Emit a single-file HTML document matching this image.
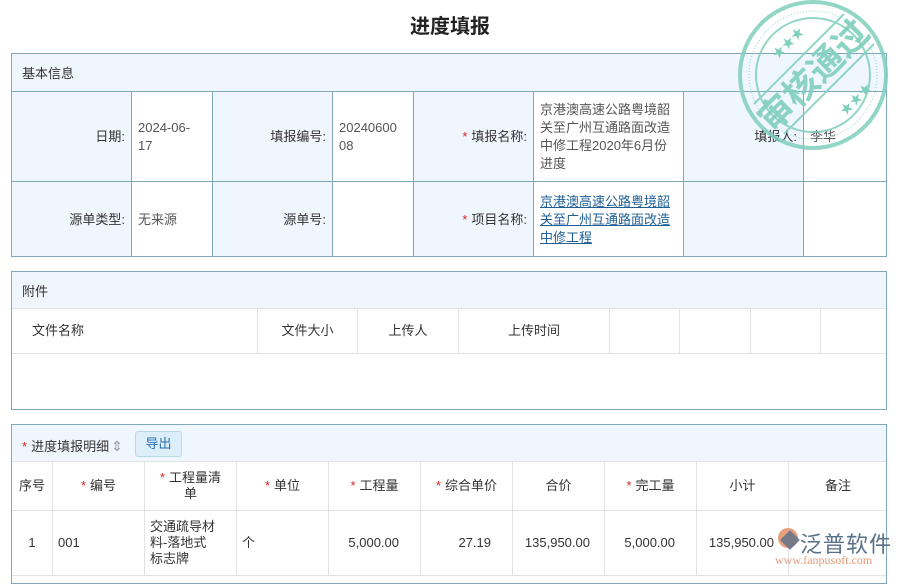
<!DOCTYPE html>
<html><head><meta charset="utf-8"><style>
*{margin:0;padding:0;box-sizing:border-box}
body{width:900px;height:576px;background:#fff;font-family:"Liberation Sans","Noto Sans CJK SC",sans-serif;font-size:13px;color:#333;position:relative;overflow:hidden}
.a{position:absolute}
.title{left:0;width:900px;top:10px;text-align:center;font-size:20px;font-weight:bold;color:#222}
.box{border:1px solid #7fa8bb}
.hd{background:#f0f6fd}
.cell{position:absolute;border-right:1px solid #7fa8bb;display:flex;align-items:center;line-height:18px}
.lab{background:#f0f6fd;justify-content:flex-end;padding-right:6px}
.val{background:#fff;padding-left:6px;color:#555}
.star{color:#d22;margin-right:4px}
.lnk{color:#1f5f96;text-decoration:underline}
.th{position:absolute;display:flex;align-items:center;justify-content:center;text-align:center;line-height:16px;border-right:1px solid #e3e3e3}
</style></head><body>
<div class="a title">进度填报</div>

<div class="a box" style="left:11px;top:53px;width:876px;height:204px;background:#f0f6fd;overflow:hidden">
 <div class="a" style="left:10px;top:9px">基本信息</div>
 <div class="a" style="left:0;top:37px;width:876px;border-top:1px solid #7fa8bb"></div>
 <div class="a" style="left:0;top:127px;width:876px;border-top:1px solid #7fa8bb"></div>
 <div class="cell lab" style="left:0;top:38px;width:120px;height:89px">日期:</div>
 <div class="cell val" style="left:120px;top:38px;width:81px;height:89px">2024-06-<br>17</div>
 <div class="cell lab" style="left:201px;top:38px;width:120px;height:89px">填报编号:</div>
 <div class="cell val" style="left:321px;top:38px;width:81px;height:89px">20240600<br>08</div>
 <div class="cell lab" style="left:402px;top:38px;width:120px;height:89px"><span class="star">*</span>填报名称:</div>
 <div class="cell val" style="left:522px;top:38px;width:150px;height:89px;padding-right:12px">京港澳高速公路粤境韶关至广州互通路面改造中修工程2020年6月份进度</div>
 <div class="cell lab" style="left:672px;top:38px;width:120px;height:89px">填报人:</div>
 <div class="cell val" style="left:792px;top:38px;width:84px;height:89px">李华</div>
 <div class="cell lab" style="left:0;top:128px;width:120px;height:76px">源单类型:</div>
 <div class="cell val" style="left:120px;top:128px;width:81px;height:76px">无来源</div>
 <div class="cell lab" style="left:201px;top:128px;width:120px;height:76px">源单号:</div>
 <div class="cell val" style="left:321px;top:128px;width:81px;height:76px"></div>
 <div class="cell lab" style="left:402px;top:128px;width:120px;height:76px"><span class="star">*</span>项目名称:</div>
 <div class="cell val" style="left:522px;top:128px;width:150px;height:76px;padding-right:12px"><span class="lnk">京港澳高速公路粤境韶关至广州互通路面改造中修工程</span></div>
 <div class="cell lab" style="left:672px;top:128px;width:120px;height:76px"></div>
 <div class="cell val" style="left:792px;top:128px;width:84px;height:76px"></div>
</div>

<div class="a box" style="left:11px;top:271px;width:876px;height:139px;overflow:hidden">
 <div class="a hd" style="left:0;top:0;width:876px;height:37px;border-bottom:1px solid #e3e3e3"></div>
 <div class="a" style="left:10px;top:9px">附件</div>
 <div class="a" style="left:0;top:37px;width:876px;height:45px;border-bottom:1px solid #e3e3e3">
  <div class="th" style="left:0;width:246px;height:44px;justify-content:flex-start;padding-left:20px">文件名称</div>
  <div class="th" style="left:246px;width:100px;height:44px">文件大小</div>
  <div class="th" style="left:346px;width:101px;height:44px">上传人</div>
  <div class="th" style="left:447px;width:151px;height:44px">上传时间</div>
  <div class="th" style="left:598px;width:70px;height:44px"></div>
  <div class="th" style="left:668px;width:71px;height:44px"></div>
  <div class="th" style="left:739px;width:70px;height:44px"></div>
 </div>
</div>

<div class="a box" style="left:11px;top:424px;width:876px;height:160px;overflow:hidden">
 <div class="a hd" style="left:0;top:0;width:876px;height:37px;border-bottom:1px solid #e3e3e3"></div>
 <div class="a" style="left:10px;top:11px"><span class="star">*</span>进度填报明细<span style="color:#999;font-size:14px;margin-left:2px">⇕</span></div>
 <div class="a" style="left:123px;top:6px;width:47px;height:26px;background:#dceefa;border:1px solid #b9d7ea;border-radius:3px;color:#2a6fa8;text-align:center;line-height:24px">导出</div>
 <div class="a" style="left:0;top:37px;width:876px;height:49px;border-bottom:1px solid #e3e3e3">
  <div class="th" style="left:0;width:41px;height:48px">序号</div>
  <div class="th" style="left:41px;width:92px;height:48px"><span class="star">*</span>编号</div>
  <div class="th" style="left:133px;width:92px;height:48px;padding:0 14px"><span><span class="star">*</span>工程量清单</span></div>
  <div class="th" style="left:225px;width:92px;height:48px"><span class="star">*</span>单位</div>
  <div class="th" style="left:317px;width:92px;height:48px"><span class="star">*</span>工程量</div>
  <div class="th" style="left:409px;width:92px;height:48px"><span class="star">*</span>综合单价</div>
  <div class="th" style="left:501px;width:92px;height:48px">合价</div>
  <div class="th" style="left:593px;width:92px;height:48px"><span class="star">*</span>完工量</div>
  <div class="th" style="left:685px;width:92px;height:48px">小计</div>
  <div class="th" style="left:777px;width:99px;height:48px">备注</div>
 </div>
 <div class="a" style="left:0;top:86px;width:876px;height:65px;border-bottom:1px solid #e3e3e3">
  <div class="th" style="left:0;width:41px;height:64px">1</div>
  <div class="th" style="left:41px;width:92px;height:64px;justify-content:flex-start;padding-left:5px">001</div>
  <div class="th" style="left:133px;width:92px;height:64px;justify-content:flex-start;padding-left:5px;padding-right:18px;text-align:left">交通疏导材料-落地式标志牌</div>
  <div class="th" style="left:225px;width:92px;height:64px;justify-content:flex-start;padding-left:5px">个</div>
  <div class="th" style="left:317px;width:92px;height:64px;justify-content:flex-end;padding-right:21px">5,000.00</div>
  <div class="th" style="left:409px;width:92px;height:64px;justify-content:flex-end;padding-right:21px">27.19</div>
  <div class="th" style="left:501px;width:92px;height:64px;justify-content:flex-end;padding-right:14px">135,950.00</div>
  <div class="th" style="left:593px;width:92px;height:64px;justify-content:flex-end;padding-right:21px">5,000.00</div>
  <div class="th" style="left:685px;width:92px;height:64px;justify-content:flex-end;padding-right:14px">135,950.00</div>
  <div class="th" style="left:777px;width:99px;height:64px"></div>
 </div>
</div>

<svg class="a" style="left:736px;top:0" width="154" height="152" viewBox="0 0 154 152">
 <g fill="none" stroke="#7fcfbd" opacity="0.85">
  <circle cx="77" cy="75" r="73" stroke-width="4"/>
  <circle cx="77" cy="75" r="64" stroke-width="1" stroke-dasharray="1 2"/>
  <circle cx="77" cy="75" r="57" stroke-width="2"/>
  <line x1="18" y1="104" x2="108" y2="14" stroke-width="2"/>
  <line x1="48" y1="134" x2="138" y2="44" stroke-width="2"/>
 </g>
 <text x="77" y="88" transform="rotate(-45 77 75)" text-anchor="middle" font-size="35" font-weight="bold" fill="#7fcfbd" opacity="0.9" font-family="'Noto Sans CJK SC',sans-serif">审核通过</text>
 <text x="34" y="58" transform="rotate(-45 40 50)" font-size="13" fill="#7fcfbd">★★★</text>
 <text x="100" y="110" transform="rotate(-45 112 102)" font-size="13" fill="#7fcfbd">★★★</text>
</svg>

<div class="a" style="left:778px;top:528px;width:20px;height:20px;border-radius:50%;background:#e7a07e"></div>
<div class="a" style="left:783px;top:533px;width:14px;height:14px;background:#5a6f88;transform:rotate(45deg);opacity:.8"></div>
<div class="a" style="left:800px;top:527px;font-size:22px;color:#5a6f88;letter-spacing:1px">泛普软件</div>
<div class="a" style="left:775px;top:553px;font-size:12px;color:#e39a78;font-family:'Liberation Serif',serif">www.fanpusoft.com</div>
</body></html>
